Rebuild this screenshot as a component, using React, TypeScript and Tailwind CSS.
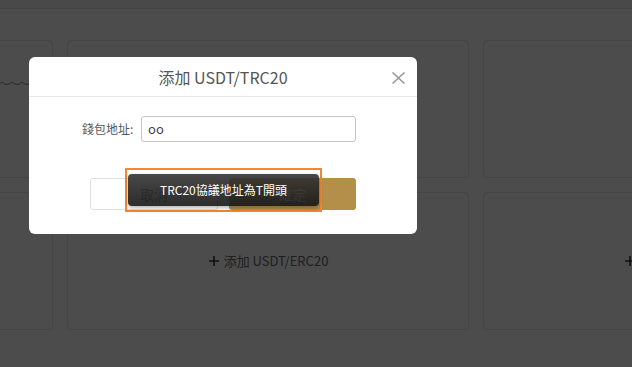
import React from 'react';

const font = "font-['Noto_Sans_CJK_TC','Liberation_Sans',sans-serif]";

const Card: React.FC<{ children?: React.ReactNode; center?: boolean }> = ({ children, center }) => (
  <div className={`w-[402px] h-[138px] shrink-0 rounded-[4px] border border-[#e6e6e6] bg-white ${center ? 'flex items-center justify-center' : ''}`}>
    {children}
  </div>
);

const AddLabel: React.FC<{ text: string }> = ({ text }) => (
  <div className="flex items-center gap-1 text-[13px] text-[#6a6a6a]">
    <svg width="12" height="12" viewBox="0 0 12 12" fill="none" stroke="#333" strokeWidth="1.6">
      <path d="M6 1v10M1 6h10" />
    </svg>
    <span>{text}</span>
  </div>
);

const Wavy = () => (
  <svg width="360" height="6" viewBox="0 0 360 6" fill="none" stroke="#8a8a8a" strokeWidth="1">
    <path d={Array.from({ length: 36 }, (_, i) => `${i === 0 ? 'M0 1 ' : ''}Q${i * 10 + 5} 6 ${i * 10 + 10} 1`).join(' ')} />
  </svg>
);

export default function App() {
  return (
    <div className={`relative w-[632px] h-[367px] overflow-hidden bg-white ${font}`}>
      {/* page */}
      <div className="h-[9px] bg-[#f3f3f3] border-b border-[#e4e4e4]" />
      <div className="pt-[31px] ml-[-349px] flex flex-col gap-[14px]">
        <div className="flex gap-[14px]">
          <Card>
            <div className="pt-[40px] pl-[20px]">
              <Wavy />
            </div>
          </Card>
          <Card />
          <Card />
        </div>
        <div className="flex gap-[14px]">
          <Card center>
            <AddLabel text="添加 USDT/OMNI" />
          </Card>
          <Card center>
            <AddLabel text="添加 USDT/ERC20" />
          </Card>
          <Card center>
            <AddLabel text="添加 USDT/TRC20" />
          </Card>
        </div>
      </div>

      {/* overlay */}
      <div className="absolute inset-0 bg-black/70" />

      {/* modal */}
      <div className="absolute left-[29px] top-[57px] w-[388px] rounded-[6px] bg-white">
        <div className="relative h-[40px] flex items-center justify-center border-b border-[#e8e8e8]">
          <span className="text-[16px] text-[#555]">添加 USDT/TRC20</span>
          <svg className="absolute right-[11px] top-[15px]" width="15" height="12" viewBox="0 0 15 12" fill="none" stroke="#9a9a9a" strokeWidth="1.6">
            <path d="M1.5 0.5l12 11M13.5 0.5l-12 11" />
          </svg>
        </div>
        <div className="pt-[19px] flex items-center pl-[53px]">
          <span className="text-[12px] text-[#555] w-[59px]">錢包地址:</span>
          <div className="w-[215px] h-[26px] rounded-[3px] border border-[#c4c4c4] flex items-center px-[6px] text-[13px] text-[#444]">
            oo
          </div>
        </div>
        <div className="pt-[36px] pb-[24px] flex justify-center gap-[11px]">
          <button className="w-[128px] h-[32px] rounded-[3px] border border-[#e0e0e0] bg-white text-[14px] text-[#888]">取消</button>
          <button className="w-[127px] h-[32px] rounded-[3px] bg-[#b38f4a] text-[14px] text-white">確定</button>
        </div>
      </div>

      {/* toast */}
      <div className="absolute left-[125px] top-[168px] w-[197px] h-[44px] border-2 border-[#f5862f] px-[1px] pt-[4px]">
        <div className="h-[32px] rounded-[4px] bg-gradient-to-b from-[rgba(52,52,52,0.9)] to-[rgba(22,22,22,0.9)] shadow-[0_2px_4px_rgba(0,0,0,0.3)] flex items-center justify-center text-[12px] text-white">
          TRC20協議地址為T開頭
        </div>
      </div>
    </div>
  );
}
